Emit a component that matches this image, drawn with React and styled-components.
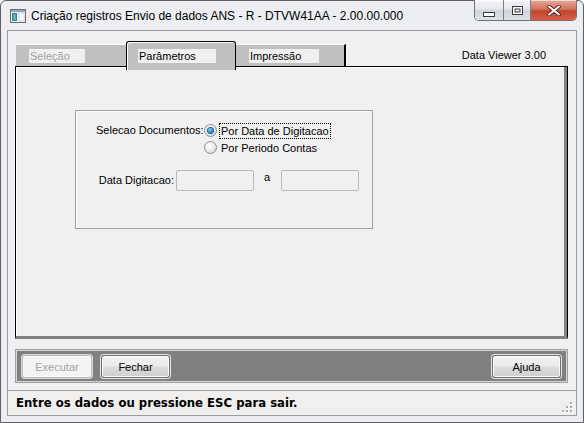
import React from 'react';
import styled, { createGlobalStyle } from 'styled-components';

const UI = '"Liberation Sans", Arial, sans-serif';

const GlobalStyle = createGlobalStyle`
  html, body {
    margin: 0;
    padding: 0;
    background: #ffffff;
  }
  body {
    width: 584px;
    height: 423px;
    overflow: hidden;
  }
`;

// window frame (Windows 7 basic look)
const Window = styled.div`
  box-sizing: border-box;
  width: 584px;
  height: 423px;
  border: 1px solid #5e6064;
  border-radius: 6px 6px 0 0;
  background: #eceef1;
  display: flex;
  flex-direction: column;
  padding: 0 6px 6px 6px;
  font-family: ${UI};
  font-size: 11px;
  color: #000;
`;

const TitleBar = styled.div`
  height: 29px;
  margin: 0 -6px;
  padding-left: 9px;
  display: flex;
  align-items: center;
  border-radius: 5px 5px 0 0;
`;

const Title = styled.span`
  margin-left: 5px;
  font-size: 12px;
  color: #000;
  white-space: nowrap;
`;

const CaptionGroup = styled.div`
  margin-left: auto;
  margin-right: 6px;
  align-self: flex-start;
  margin-top: -1px;
  display: flex;
  height: 20px;
  border: 1px solid #6f7277;
  border-top: none;
  border-radius: 0 0 5px 5px;
  overflow: hidden;
`;

const CaptionButton = styled.div`
  box-sizing: border-box;
  width: ${p => p.$w}px;
  height: 100%;
  display: flex;
  align-items: center;
  justify-content: center;
  border-left: ${p => (p.$first ? 'none' : '1px solid #7c7f84')};
  background: ${p => (p.$close
    ? 'linear-gradient(#e8a898 0%, #d5735e 45%, #c3432c 55%, #d0634b 100%)'
    : 'linear-gradient(#f3f4f6 0%, #e4e7eb 45%, #d0d4da 55%, #dfe2e7 100%)')};
  box-shadow: inset 0 1px 0 rgba(255,255,255,0.6);
`;

const Client = styled.div`
  flex: 1;
  display: flex;
  flex-direction: column;
  border: 1px solid #9a9da2;
  background: #f0f0f0;
  padding: 10px 8px 0 7px;
  min-height: 0;
`;

const TabStrip = styled.div`
  position: relative;
  z-index: 2;
  height: 25px;
  display: flex;
  align-items: flex-end;
  padding-left: 1px;
`;

const Tab = styled.div`
  box-sizing: border-box;
  width: 110px;
  height: ${p => (p.$active ? 29 : 22)}px;
  margin-bottom: ${p => (p.$active ? -4 : 0)}px;
  padding: ${p => (p.$active ? '7px 0 0 11px' : '4px 0 0 13px')};
  background: #c0c0c0;
  border: ${p => (p.$active ? '1px solid #000' : 'none')};
  border-bottom: none;
  border-right: ${p => (p.$active ? '1px solid #000' : p.$last ? '2px solid #000' : 'none')};
  border-top: ${p => (p.$active ? '1px solid #000' : '1px solid #ffffff')};
  border-radius: ${p => (p.$active ? '3px 3px 0 0' : '0')};
  box-shadow: ${p => (p.$active ? 'inset 1px 1px 0 #ffffff' : 'none')};
`;

const TabLabel = styled.div`
  width: ${p => p.$w}px;
  height: 14px;
  line-height: 14px;
  padding-left: 1px;
  box-sizing: border-box;
  background: #f0f0f0;
  color: ${p => (p.$disabled ? '#a0a0a0' : '#000')};
  white-space: nowrap;
`;

const Version = styled.span`
  margin-left: auto;
  margin-right: 22px;
  margin-bottom: 4px;
  line-height: 14px;
`;

const Panel = styled.div`
  position: relative;
  z-index: 1;
  box-sizing: border-box;
  height: 273px;
  background: #f0f0f0;
  border-top: 1px solid #000;
  border-left: 1px solid #000;
  border-right: 1px solid #000;
  border-bottom: 3px solid #808080;
  box-shadow: inset -3px 0 0 #808080, inset 1px 1px 0 #ffffff;
  padding: 43px 0 0 59px;
`;

const Group = styled.div`
  box-sizing: border-box;
  width: 298px;
  height: 119px;
  border: 1px solid #a0a0a0;
  box-shadow: inset 1px 1px 0 #ffffff;
  padding: 11px 0 0 20px;
`;

const Row = styled.div`
  display: flex;
  align-items: flex-start;
  margin-top: ${p => p.$top || 0}px;
  margin-left: ${p => p.$left || 0}px;
`;

const FieldLabel = styled.span`
  width: ${p => p.$w}px;
  flex: none;
  text-align: right;
  line-height: ${p => p.$lh || 17}px;
  white-space: nowrap;
`;

const RadioList = styled.div`
  display: flex;
  flex-direction: column;
  margin-left: 3px;
`;

const RadioOption = styled.label`
  height: 17px;
  display: flex;
  align-items: center;
  gap: 3px;
`;

const RadioDot = styled.span`
  box-sizing: border-box;
  width: 13px;
  height: 13px;
  border-radius: 50%;
  border: 1px solid #8e8f8f;
  background: radial-gradient(circle at 40% 35%, #ffffff 0%, #e8e8e8 55%, #c9c9c9 100%);
  display: flex;
  align-items: center;
  justify-content: center;
  &::after {
    content: '';
    display: ${p => (p.$checked ? 'block' : 'none')};
    width: 5px;
    height: 5px;
    border-radius: 50%;
    background: radial-gradient(circle at 40% 35%, #9ad4f7 0%, #2a8ad4 50%, #0c4f8c 100%);
    box-shadow: 0 0 0 1px #1b5e96;
  }
`;

const RadioText = styled.span`
  line-height: 14px;
  padding: 0 1px;
  outline: ${p => (p.$focus ? '1px dotted #000' : 'none')};
  white-space: nowrap;
`;

const Input = styled.div`
  box-sizing: border-box;
  width: 78px;
  height: 21px;
  margin-left: ${p => p.$gap || 0}px;
  border: 1px solid #b8b8b8;
  border-radius: 2px;
  background: #f0f0f0;
  flex: none;
`;

const Sep = styled.span`
  width: 17px;
  padding-left: 10px;
  line-height: 15px;
  flex: none;
`;

const ButtonBar = styled.div`
  box-sizing: border-box;
  height: 34px;
  margin-top: 10px;
  border: 1px solid #a0a0a0;
  box-shadow: inset 0 0 0 1px #d6d6d6;
  background: #808080;
  display: flex;
  align-items: flex-start;
  padding: 5px 6px 0 6px;
  gap: 9px;
`;

const Button = styled.div`
  box-sizing: border-box;
  width: ${p => p.$w || 69}px;
  height: 23px;
  margin-left: ${p => (p.$right ? 'auto' : '0')};
  display: flex;
  align-items: center;
  justify-content: center;
  border: 1px solid ${p => (p.$disabled ? '#b5b8bb' : '#707070')};
  border-radius: 3px;
  color: ${p => (p.$disabled ? '#a3a3a3' : '#000')};
  background: ${p => (p.$disabled
    ? '#f4f4f4'
    : 'linear-gradient(#f2f2f2 0%, #ebebeb 48%, #dddddd 52%, #cfcfcf 100%)')};
  box-shadow: 0 0 0 1px ${p => (p.$disabled ? '#d8d8d8' : '#e6e6e6')}, inset 0 0 0 1px #fbfbfb;
`;

const StatusBar = styled.div`
  box-sizing: border-box;
  height: 25px;
  margin: 7px -8px 0 -7px;
  border-top: 1px solid #a0a0a0;
  background: #f1efee;
  display: flex;
  align-items: center;
  padding: 0 3px 0 8px;
`;

const StatusText = styled.span`
  font-family: "DejaVu Sans", Verdana, sans-serif;
  font-weight: bold;
  font-size: 11.7px;
  white-space: nowrap;
`;

const Grip = styled.svg`
  margin-left: auto;
  align-self: flex-end;
  margin-bottom: 2px;
`;

function AppIcon() {
  return (
    <svg width="16" height="14" viewBox="0 0 16 14">
      <rect x="0.5" y="0.5" width="15" height="13" fill="#f4f4f4" stroke="#6b6b6b" />
      <rect x="1" y="1" width="14" height="2" fill="#8fa9c8" />
      <rect x="2" y="4" width="5" height="8" fill="#2f7fa6" />
      <rect x="3" y="5" width="3" height="6" fill="#5fb1a0" />
      <rect x="9" y="4" width="5" height="8" fill="#ffffff" stroke="#a8a8a8" strokeWidth="0.5" />
    </svg>
  );
}

function CaptionButtons() {
  return (
    <CaptionGroup>
      <CaptionButton $w={28} $first>
        <svg width="12" height="13" viewBox="0 0 12 13">
          <rect x="0.5" y="8.5" width="11" height="4" fill="#fff" stroke="#3a3a3a" />
        </svg>
      </CaptionButton>
      <CaptionButton $w={27}>
        <svg width="11" height="9" viewBox="0 0 11 9">
          <rect x="0.5" y="0.5" width="10" height="8" fill="#fff" stroke="#3a3a3a" />
          <rect x="3" y="3" width="5" height="3" fill="#e8e8e8" stroke="#3a3a3a" strokeWidth="1" />
        </svg>
      </CaptionButton>
      <CaptionButton $w={46} $close>
        <svg width="14" height="11" viewBox="0 0 14 11">
          <path d="M2 1.5 L12 9.5 M12 1.5 L2 9.5" stroke="#5a2018" strokeWidth="3.6" strokeLinecap="round" />
          <path d="M2 1.5 L12 9.5 M12 1.5 L2 9.5" stroke="#ffffff" strokeWidth="2" strokeLinecap="round" />
        </svg>
      </CaptionButton>
    </CaptionGroup>
  );
}

function ResizeGrip() {
  const dots = [[8, 0], [8, 4], [4, 4], [8, 8], [4, 8], [0, 8]];
  return (
    <Grip width="11" height="11" viewBox="0 0 11 11">
      {dots.map(([x, y]) => (
        <g key={`${x}-${y}`}>
          <rect x={x + 1} y={y + 1} width="2" height="2" fill="#ffffff" />
          <rect x={x} y={y} width="2" height="2" fill="#a8a8a8" />
        </g>
      ))}
    </Grip>
  );
}

const tabs = [
  { label: 'Seleção', w: 56, disabled: true },
  { label: 'Parâmetros', w: 78, active: true },
  { label: 'Impressão', w: 70, last: true },
];

export default function App() {
  return (
    <>
      <GlobalStyle />
      <Window>
        <TitleBar>
          <AppIcon />
          <Title>Criação registros Envio de dados ANS - R - DTVW41AA - 2.00.00.000</Title>
          <CaptionButtons />
        </TitleBar>
        <Client>
          <TabStrip>
            {tabs.map(t => (
              <Tab key={t.label} $active={t.active} $last={t.last}>
                <TabLabel $w={t.w} $disabled={t.disabled}>{t.label}</TabLabel>
              </Tab>
            ))}
            <Version>Data Viewer 3.00</Version>
          </TabStrip>
          <Panel>
            <Group>
              <Row>
                <FieldLabel $w={105}>Selecao Documentos:</FieldLabel>
                <RadioList>
                  <RadioOption>
                    <RadioDot $checked />
                    <RadioText $focus>Por Data de Digitacao</RadioText>
                  </RadioOption>
                  <RadioOption>
                    <RadioDot />
                    <RadioText>Por Periodo Contas</RadioText>
                  </RadioOption>
                </RadioList>
              </Row>
              <Row $top={14} $left={2}>
                <FieldLabel $w={76} $lh={21}>Data Digitacao:</FieldLabel>
                <Input $gap={2} />
                <Sep>a</Sep>
                <Input />
              </Row>
            </Group>
          </Panel>
          <ButtonBar>
            <Button $disabled $w={70}>Executar</Button>
            <Button $w={69}>Fechar</Button>
            <Button $w={69} $right>Ajuda</Button>
          </ButtonBar>
          <StatusBar>
            <StatusText>Entre os dados ou pressione ESC para sair.</StatusText>
            <ResizeGrip />
          </StatusBar>
        </Client>
      </Window>
    </>
  );
}
